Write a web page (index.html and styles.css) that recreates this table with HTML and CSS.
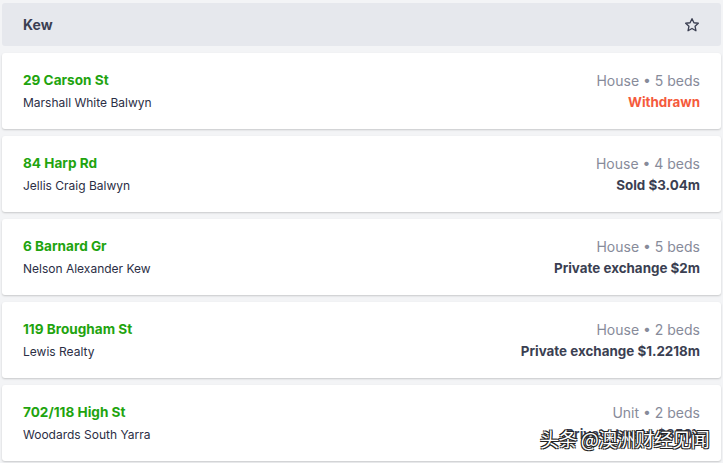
FILE: index.html
```html
<!DOCTYPE html>
<html>
<head>
<meta charset="utf-8">
<link rel="stylesheet" href="styles.css">
</head>
<body>
<div class="page">
  <div class="header">
    <span class="suburb">Kew</span>
    <svg class="star" width="16" height="16" viewBox="0 0 24 24" fill="none" stroke="#3b3f52" stroke-width="2" stroke-linejoin="round"><path d="M12 2.5l2.9 6.1 6.6.8-4.9 4.6 1.3 6.6L12 17.3l-5.9 3.3 1.3-6.6-4.9-4.6 6.6-.8z"/></svg>
  </div>
  <div class="card">
    <div class="left"><div class="addr">29 Carson St</div><div class="agent">Marshall White Balwyn</div></div>
    <div class="right"><div class="meta">House • 5 beds</div><div class="result withdrawn">Withdrawn</div></div>
  </div>
  <div class="card">
    <div class="left"><div class="addr">84 Harp Rd</div><div class="agent">Jellis Craig Balwyn</div></div>
    <div class="right"><div class="meta">House • 4 beds</div><div class="result">Sold $3.04m</div></div>
  </div>
  <div class="card">
    <div class="left"><div class="addr">6 Barnard Gr</div><div class="agent">Nelson Alexander Kew</div></div>
    <div class="right"><div class="meta">House • 5 beds</div><div class="result">Private exchange $2m</div></div>
  </div>
  <div class="card">
    <div class="left"><div class="addr">119 Brougham St</div><div class="agent">Lewis Realty</div></div>
    <div class="right"><div class="meta">House • 2 beds</div><div class="result">Private exchange $1.2218m</div></div>
  </div>
  <div class="card">
    <div class="left"><div class="addr">702/118 High St</div><div class="agent">Woodards South Yarra</div></div>
    <div class="right"><div class="meta">Unit • 2 beds</div><div class="result">Private treaty $350k</div></div>
  </div>
  <div class="watermark">头条 @澳洲财经见闻</div>
</div>
</body>
</html>
```
FILE: styles.css
```css
html, body { margin: 0; padding: 0; }
body {
  background: #f3f4f6;
  font-family: Inter, "Noto Sans", sans-serif;
  width: 723px;
  height: 463px;
  overflow: hidden;
}
.page {
  position: relative;
  padding: 3px 2px 0 2px;
  display: flex;
  flex-direction: column;
  gap: 7px;
}
.header {
  height: 43px;
  background: #e6e8ed;
  border-radius: 3px;
  display: flex;
  align-items: center;
  justify-content: space-between;
  padding: 0 21px;
}
.suburb {
  font-weight: 700;
  font-size: 14px;
  color: #3b3f52;
}
.star { display: block; }
.card {
  height: 76px;
  box-sizing: border-box;
  background: #fff;
  border-radius: 3px;
  box-shadow: 0 1px 2px rgba(0,0,0,0.18);
  display: flex;
  justify-content: space-between;
  align-items: center;
  padding: 0 21px;
}
.left, .right { display: flex; flex-direction: column; gap: 5px; }
.right { align-items: flex-end; }
.addr {
  color: #1fa40f;
  font-weight: 700;
  font-size: 13.6px;
  line-height: 17px;
}
.agent {
  color: #2b2e45;
  font-size: 12px;
  line-height: 17px;
}
.meta {
  color: #878b9a;
  font-size: 14px;
  line-height: 17px;
}
.result {
  color: #3b3f52;
  font-weight: 700;
  font-size: 13.4px;
  line-height: 17px;
}
.withdrawn { color: #f55a3c; }
.watermark {
  position: absolute;
  left: 540px;
  top: 425px;
  font-family: "Noto Sans CJK SC", sans-serif;
  font-size: 19px;
  color: #fff;
  letter-spacing: -0.5px;
  text-shadow: 1px 1px 0 #222, -1px -1px 0 #222, 1px -1px 0 #222, -1px 1px 0 #222;
}
```
